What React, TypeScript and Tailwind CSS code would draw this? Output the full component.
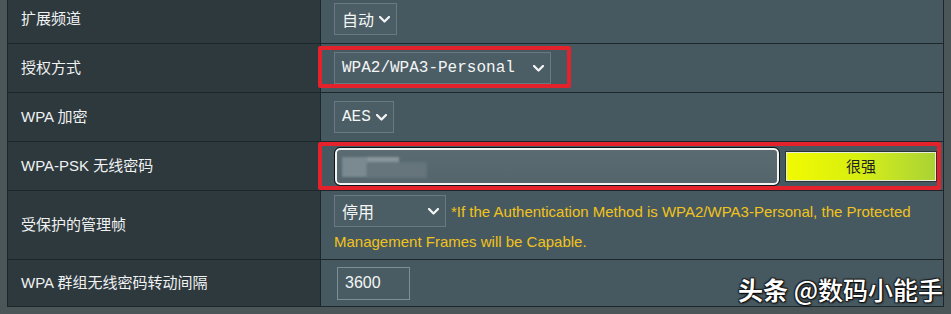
import React from "react";

const Chevron = () => (
  <svg width="11" height="7" viewBox="0 0 11 7" fill="none" className="shrink-0">
    <polyline points="1,1 5.5,5.5 10,1" stroke="#f2f4f4" strokeWidth="2.3" strokeLinecap="round" strokeLinejoin="round" />
  </svg>
);

const Select = ({ text, w, mono }: { text: string; w: string; mono?: boolean }) => (
  <div
    className={`${w} h-[32px] border border-[#687a80] bg-[#4c5e65] flex items-center justify-between pl-[7px] pr-[6px] text-[16px] text-[#f4f6f6]`}
    style={{ fontFamily: mono ? '"Liberation Mono", "Noto Sans CJK SC", monospace' : '"Noto Sans CJK SC", "Liberation Sans", sans-serif' }}
  >
    <span className="leading-none">{text}</span>
    <Chevron />
  </div>
);

const Row = ({ label, h, children }: { label: string; h: string; children: React.ReactNode }) => (
  <div className={`flex ${h} border-b border-[#1d272b]`}>
    <div className="w-[313px] shrink-0 bg-[#2e393e] border-r border-[#1d272b] flex items-center pl-[13px] text-[15px] text-[#f0f2f2]">
      {label}
    </div>
    <div className="flex-1 bg-[#475960] flex items-center pl-[13px]">{children}</div>
  </div>
);

export default function App() {
  return (
    <div
      className="w-[951px] h-[314px] bg-[#4b5658] px-[7px] overflow-hidden relative"
      style={{ fontFamily: '"Liberation Sans", "Noto Sans CJK SC", sans-serif' }}
    >
      <div className="border-l border-r border-[#1d272b] -mt-[5px]">
        <Row label="扩展频道" h="h-[49px]">
          <Select text="自动" w="w-[63px]" />
        </Row>
        <Row label="授权方式" h="h-[49px]">
          <Select text="WPA2/WPA3-Personal" w="w-[217px]" mono />
        </Row>
        <Row label="WPA 加密" h="h-[49px]">
          <Select text="AES" w="w-[60px]" mono />
        </Row>
        <Row label="WPA-PSK 无线密码" h="h-[49px]">
          <div className="flex items-center">
            <div className="ml-[1px] w-[444px] h-[37px] rounded-[5px] border-[2px] border-[#f2f4f4] outline outline-1 outline-[#0e1416] bg-gradient-to-b from-[#5b6b72] to-[#54656c] relative overflow-hidden">
              <div className="absolute left-[5px] top-[7px] w-[26px] h-[20px] bg-[#7a8a90] blur-[1px]" />
              <div className="absolute left-[30px] top-[7px] w-[32px] h-[7px] bg-[#8a989d] blur-[1px]" />
              <div className="absolute left-[30px] top-[12px] w-[60px] h-[16px] bg-[#65757b] blur-[1.5px]" />
            </div>
            <div className="ml-[6px] w-[152px] h-[31px] border border-[#2c3436] outline outline-1 outline-[#e8ecd8] -outline-offset-2 bg-gradient-to-r from-[#f2fa00] via-[#d6ee10] to-[#a9d334] flex items-center justify-center text-[15px] text-[#1e2320]" style={{ fontFamily: '"Noto Sans CJK SC", sans-serif' }}>
              很强
            </div>
          </div>
        </Row>
        <div className="flex h-[69px] border-b border-[#1d272b]">
          <div className="w-[313px] shrink-0 bg-[#2e393e] border-r border-[#1d272b] flex items-center pl-[13px] text-[15px] text-[#f0f2f2]">
            受保护的管理帧
          </div>
          <div className="flex-1 bg-[#475960] pl-[13px] pt-[4px] text-[15px] text-[#f1c31c] leading-[26px]">
            <div className="flex items-center">
              <Select text="停用" w="w-[112px]" />
              <span className="ml-[5px] mt-[1px]">*If the Authentication Method is WPA2/WPA3-Personal, the Protected</span>
            </div>
            <div className="mt-[2px]">Management Frames will be Capable.</div>
          </div>
        </div>
        <Row label="WPA 群组无线密码转动间隔" h="h-[47px]">
          <div className="ml-[3px] w-[73px] h-[33px] border border-[#7d8f94] bg-[#4a5c63] flex items-center pl-[7px] text-[16px] text-[#f4f6f6]">
            3600
          </div>
        </Row>
      </div>

      {/* annotation boxes */}
      <div className="absolute left-[318px] top-[46px] w-[253px] h-[42px] border-[4px] border-[#e3222b] rounded-[2px]" />
      <div className="absolute left-[318px] top-[142px] w-[623px] h-[48px] border-[4px] border-[#e3222b] rounded-[2px]" />

      {/* watermark */}
      <div
        className="absolute left-[738px] top-[277px] text-[25px] text-white leading-none whitespace-nowrap font-medium"
        style={{ fontFamily: '"Noto Sans CJK SC", sans-serif', textShadow: "1px 1px 2px #000, -1px -1px 1px #222, 1px -1px 1px #222, -1px 1px 1px #222" }}
      >
        <span className="font-bold">头条</span> @数码小能手
      </div>
    </div>
  );
}
